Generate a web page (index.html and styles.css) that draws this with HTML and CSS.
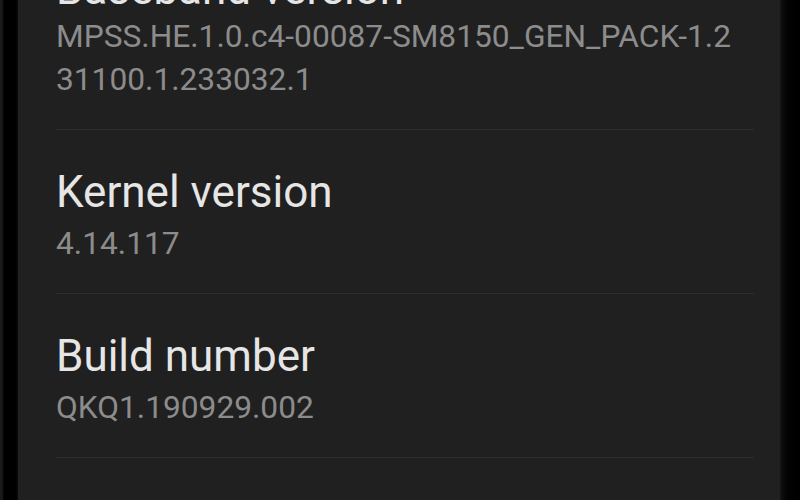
FILE: index.html
```html
<!DOCTYPE html>
<html lang="en">
<head>
<meta charset="utf-8">
<title>About phone</title>
<link rel="stylesheet" href="styles.css">
</head>
<body>
<div class="screen">
  <div class="edge edge-left"></div>
  <main class="panel">
    <ul class="prefs">
      <li class="pref pref-tight">
        <div class="pref-title">Baseband version</div>
        <div class="pref-summary">MPSS.HE.1.0.c4-00087-SM8150_GEN_PACK-1.231100.1.233032.1</div>
      </li>
      <li class="pref">
        <div class="pref-title">Kernel version</div>
        <div class="pref-summary">4.14.117</div>
      </li>
      <li class="pref">
        <div class="pref-title">Build number</div>
        <div class="pref-summary">QKQ1.190929.002</div>
      </li>
    </ul>
  </main>
  <div class="edge edge-right"></div>
</div>
</body>
</html>
```
FILE: styles.css
```css
html, body {
  margin: 0;
  padding: 0;
  background: #050505;
}
.screen {
  display: flex;
  width: 800px;
  height: 500px;
  overflow: hidden;
  font-family: Roboto, "Liberation Sans", sans-serif;
}
.edge {
  flex: none;
  background: #040404;
}
.edge-left {
  width: 18px;
  background: linear-gradient(to right, #1a1a1a 0, #1a1a1a 2px, #000 4px, #000 16px, #0c0c0c 18px);
}
.edge-right {
  width: 20px;
  background: linear-gradient(to right, #161616 0, #0a0a0a 3px, #020202 8px, #000 20px);
}
.panel {
  flex: 1;
  background: #202020;
  overflow: hidden;
}
.prefs {
  list-style: none;
  margin: -73px 26px 0 38px;
  padding: 0;
}
.pref {
  padding: 36px 0 28px 0;
  border-bottom: 1px solid #2e2e2e;
}
.pref-title {
  font-size: 44px;
  line-height: 52px;
  color: #e6e6e6;
}
.pref-summary {
  margin-top: 4px;
  max-width: 688px;
  font-size: 31.7px;
  line-height: 43px;
  color: #8c8c8c;
  word-break: break-all;
}
.pref-tight .pref-summary {
  margin-top: 0;
}
```
